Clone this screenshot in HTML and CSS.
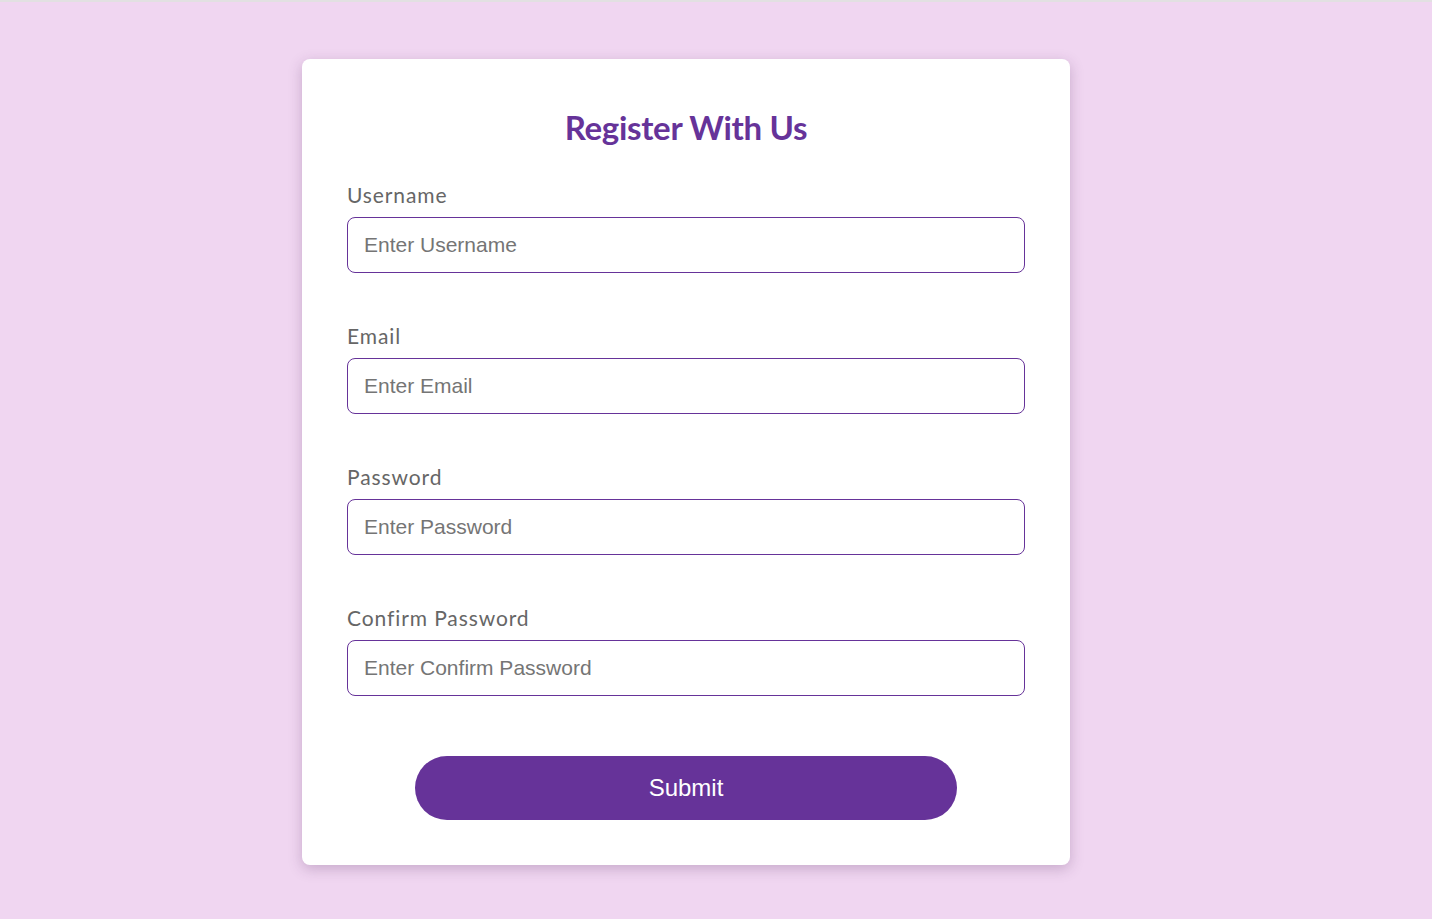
FILE: index.html
```html
<!DOCTYPE html>
<html lang="en">
<head>
  <meta charset="UTF-8" />
  <meta name="viewport" content="width=device-width, initial-scale=1.0"/>
  <title>Register With Us</title>
  <link rel="stylesheet" href="styles.css">
</head>
<body>
  <div class="card">
    <h1>Register With Us</h1>

    <form id="register-form">
      <div class="field">
        <label for="username">Username</label>
        <input type="text" id="username" placeholder="Enter Username">
      </div>
      <div class="field">
        <label for="email">Email</label>
        <input type="email" id="email" placeholder="Enter Email">
      </div>
      <div class="field">
        <label for="password">Password</label>
        <input type="password" id="password" placeholder="Enter Password">
      </div>
      <div class="field">
        <label for="confirm">Confirm Password</label>
        <input type="password" id="confirm" placeholder="Enter Confirm Password">
      </div>

      <button type="submit">Submit</button>
    </form>
  </div>
</body>
</html>
```

FILE: styles.css
```css
:root {
  --background-color: #f0d6f1;
  --main-color: #663399;
  --label-color: #666666;
}

body {
  margin: 0;
  padding: 57px 0 54px;
  background-color: var(--background-color);
  font-family: Lato, "Open Sans", sans-serif;
  border-top: 2px solid #e2e0e2;
  box-sizing: border-box;
  min-height: 100vh;
}

.card {
  width: 768px;
  margin-left: 302px;
  padding: 45px;
  box-sizing: border-box;
  background-color: #ffffff;
  border-radius: 8px;
  box-shadow: 0 4px 14px rgba(80, 40, 90, 0.25);
}

h1 {
  margin: 3px 0 34px;
  text-align: center;
  font-size: 33px;
  line-height: 40px;
  font-weight: 700;
  letter-spacing: -0.3px;
  color: var(--main-color);
}

.field {
  margin-bottom: 49px;
}

label {
  display: block;
  margin-bottom: 8px;
  font-size: 21px;
  line-height: 28px;
  letter-spacing: 0.9px;
  color: var(--label-color);
}

input {
  display: block;
  width: 100%;
  height: 56px;
  box-sizing: border-box;
  padding: 0 16px;
  border: 1px solid var(--main-color);
  border-radius: 8px;
  font-family: "Liberation Sans", Arial, sans-serif;
  font-size: 21px;
  color: #333;
  outline: none;
}

input::placeholder {
  color: #757575;
}

button {
  display: block;
  width: 80%;
  height: 64px;
  margin: 60px auto 0;
  border: none;
  border-radius: 32px;
  background-color: var(--main-color);
  color: #ffffff;
  font-family: "Liberation Sans", Arial, sans-serif;
  font-size: 24px;
  cursor: pointer;
}

form .field:last-of-type {
  margin-bottom: 0;
}
```
